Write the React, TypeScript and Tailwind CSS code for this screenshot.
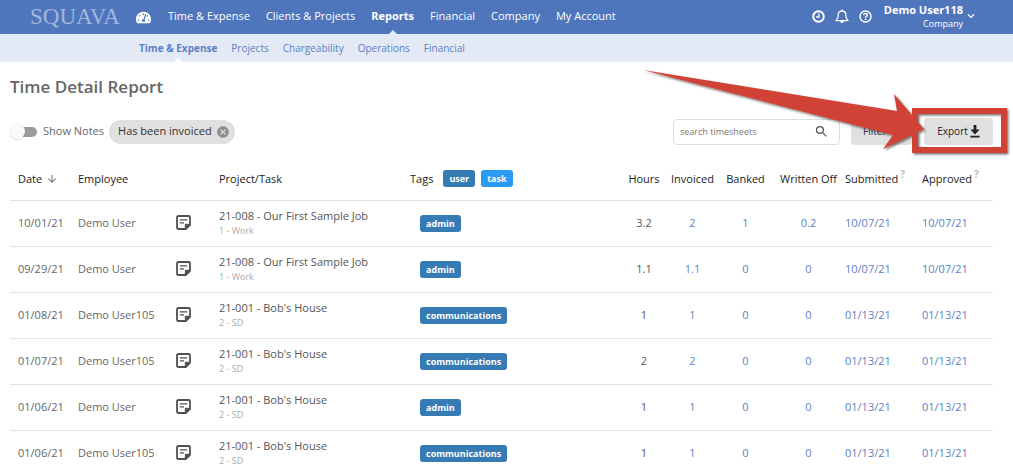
import * as React from 'react';
import { FaTachometerAlt, FaChevronDown } from 'react-icons/fa';
import { MdArrowDownward, MdCancel, MdSearch } from 'react-icons/md';

const tabs = ['Time & Expense', 'Clients & Projects', 'Reports', 'Financial', 'Company', 'My Account'];
const subTabs = ['Time & Expense', 'Projects', 'Chargeability', 'Operations', 'Financial'];

type Entry = {
  date: string;
  employee: string;
  project: string;
  task: string;
  tag: string;
  hours: string;
  invoiced: string;
  banked: string;
  writtenOff: string;
  submitted: string;
};

const entries: Entry[] = [
  { date: '10/01/21', employee: 'Demo User', project: '21-008 - Our First Sample Job', task: '1 - Work', tag: 'admin', hours: '3.2', invoiced: '2', banked: '1', writtenOff: '0.2', submitted: '10/07/21' },
  { date: '09/29/21', employee: 'Demo User', project: '21-008 - Our First Sample Job', task: '1 - Work', tag: 'admin', hours: '1.1', invoiced: '1.1', banked: '0', writtenOff: '0', submitted: '10/07/21' },
  { date: '01/08/21', employee: 'Demo User105', project: "21-001 - Bob's House", task: '2 - SD', tag: 'communications', hours: '1', invoiced: '1', banked: '0', writtenOff: '0', submitted: '01/13/21' },
  { date: '01/07/21', employee: 'Demo User105', project: "21-001 - Bob's House", task: '2 - SD', tag: 'communications', hours: '2', invoiced: '2', banked: '0', writtenOff: '0', submitted: '01/13/21' },
  { date: '01/06/21', employee: 'Demo User', project: "21-001 - Bob's House", task: '2 - SD', tag: 'admin', hours: '1', invoiced: '1', banked: '0', writtenOff: '0', submitted: '01/13/21' },
  { date: '01/06/21', employee: 'Demo User105', project: "21-001 - Bob's House", task: '2 - SD', tag: 'communications', hours: '1', invoiced: '1', banked: '0', writtenOff: '0', submitted: '01/13/21' },
];

/* Icons */
const ClockIcon = () => (
  <svg width="13" height="13" viewBox="0 0 13 13" fill="none" stroke="currentColor">
    <circle cx="6.5" cy="6.5" r="5.3" strokeWidth="1.9" />
    <path d="M6.9 3.4V7H4.2" strokeWidth="1.3" />
  </svg>
);

const BellIcon = () => (
  <svg width="14" height="15" viewBox="0 0 14 15" fill="none" stroke="currentColor" strokeWidth="1.3" strokeLinejoin="round">
    <path d="M7 .6V2M1 11.6C2.6 10.2 3.2 8.6 3.2 5.8C3.2 3.6 4.8 2 7 2C9.2 2 10.8 3.6 10.8 5.8C10.8 8.6 11.4 10.2 13 11.6Z" />
    <path d="M5.4 12.4C5.6 14.2 8.4 14.2 8.6 12.4Z" fill="currentColor" strokeWidth=".6" />
  </svg>
);

const HelpIcon = () => (
  <svg width="13" height="13" viewBox="0 0 13 13" fill="none" stroke="currentColor">
    <circle cx="6.5" cy="6.5" r="5.5" strokeWidth="1.4" />
    <path d="M4.6 5.1C4.8 3 8.4 3.1 8.4 5C8.4 6.3 6.6 6.2 6.6 7.7" strokeWidth="1.5" />
    <path d="M6.6 8.6V10.1" strokeWidth="1.6" />
  </svg>
);

const NoteIcon = () => (
  <svg width="15" height="15" viewBox="0 0 15 15" fill="none" stroke="#505050">
    <path d="M2.4 1H12.6Q14 1 14 2.4V9.8L9.8 14H2.4Q1 14 1 12.6V2.4Q1 1 2.4 1Z" strokeWidth="1.8" strokeLinejoin="round" />
    <path d="M9.3 14V9.3H14Z" fill="#505050" strokeWidth="1" />
    <path d="M3.8 4.8H11.2M3.8 7.8H8" strokeWidth="1.3" />
  </svg>
);

const DownloadIcon = () => (
  <svg width="10" height="13" viewBox="0 0 10 13" fill="currentColor">
    <path d="M3.6 0H6.4V4.6H9.6L5 9.6L.4 4.6H3.6ZM.4 10.8H9.6V12.6H.4Z" />
  </svg>
);

const Pointer: React.FC<{ className: string }> = ({ className }) => (
  <svg className={`absolute bottom-0 left-1/2 -ml-1 ${className}`} width="8" height="4" viewBox="0 0 8 4" fill="currentColor">
    <path d="M0 4L4 0L8 4Z" />
  </svg>
);

const Header: React.FC = () => (
  <header>
    <div className="flex h-[34px] items-center bg-[#4f76bd] pr-[38px] pl-[30px] text-white">
      <a href="#home" className="w-[90px] font-['Liberation_Serif',serif] text-[23px] leading-[30px] text-[#a3b7dd]">
        SQUAVA
      </a>
      <a href="#dashboard" aria-label="Dashboard" className="ml-4">
        <FaTachometerAlt size={15} />
      </a>
      <nav className="ml-[17px] flex h-full gap-4 pb-px text-[11px]">
        {tabs.map((tab) => (
          <a key={tab} href="#tab" className="relative flex items-center whitespace-nowrap">
            <span className={tab === 'Reports' ? 'font-bold' : 'font-medium'}>{tab}</span>
            {tab === 'Reports' && <Pointer className="-mb-px text-[#e4eaf5]" />}
          </a>
        ))}
      </nav>
      <div className="ml-auto flex items-center gap-[10px] pb-[2px]">
        <button aria-label="Timer"><ClockIcon /></button>
        <button aria-label="Notifications"><BellIcon /></button>
        <button aria-label="Help"><HelpIcon /></button>
        <button className="ml-[2px] flex items-center gap-1 text-right">
          <span>
            <span className="block text-[11px] leading-[14px] font-bold">Demo User118</span>
            <span className="block text-[9px] leading-[13px] font-medium">Company</span>
          </span>
          <FaChevronDown size={8} />
        </button>
      </div>
    </div>
    <nav className="flex h-7 gap-[14px] bg-[#e4eaf5] pl-[139px] text-[10px] text-[#5b7fc4]">
      {subTabs.map((tab, i) => (
        <a key={tab} href="#sub" className="relative flex items-center whitespace-nowrap">
          <span className={i === 0 ? 'font-bold' : ''}>{tab}</span>
          {i === 0 && <Pointer className="text-white" />}
        </a>
      ))}
    </nav>
  </header>
);

const Toolbar: React.FC = () => (
  <div className="mt-[19px] flex items-center">
    <label className="flex items-center gap-[6px] text-[11px]">
      <span className="relative flex h-4 w-[27px] items-center justify-end">
        <input type="checkbox" className="peer sr-only" />
        <span className="h-[10px] w-6 rounded-full bg-[#9b9b9b]" />
        <span className="absolute left-0 size-[15px] rounded-full bg-[#fafafa] shadow" />
      </span>
      Show Notes
    </label>
    <div className="ml-[5px] flex h-6 items-center gap-1 rounded-full bg-[#e0e0e0] pr-[5px] pl-[9px] text-[11px] text-[#333]">
      Has been invoiced
      <button aria-label="Remove filter" className="text-[#8d8d8d]"><MdCancel size={14} /></button>
    </div>
    <div className="ml-auto flex h-[26px] w-[167px] items-center rounded border border-[#ddd] pr-[10px] pl-[6px]">
      <input aria-label="search timesheets" placeholder="search timesheets" className="min-w-0 flex-1 text-[9px] outline-none placeholder:text-[#777]" />
      <MdSearch size={15} className="text-[#555]" />
    </div>
    <button className="ml-[11px] h-[27px] w-[61px] rounded bg-[#e0e0e0] pl-3 text-left text-[10px] text-[#333]">Filter</button>
    <div className="relative ml-3">
      <button className="flex h-[27px] w-[69px] items-center justify-center gap-[2px] rounded bg-[#e0e0e0] text-[10px] text-[#222]">
        Export <DownloadIcon />
      </button>
      {/* Callout */}
      <svg className="pointer-events-none absolute -top-12 -right-[18px]" width="370" height="94" viewBox="0 0 370 94" aria-hidden="true">
        <defs>
          <filter id="shadow" x="-5%" y="-5%" width="115%" height="120%">
            <feDropShadow dx="1.5" dy="1.5" stdDeviation="1" floodColor="#000" floodOpacity="0.55" />
          </filter>
        </defs>
        <g filter="url(#shadow)">
          <rect x="274" y="41" width="89" height="39" fill="none" stroke="#cf4336" strokeWidth="6" />
          <path d="M2 0L256 41L253 24L283 59L242 79L252 65Z" fill="#cf4336" />
        </g>
      </svg>
    </div>
  </div>
);

const Tag: React.FC<{ children: string; light?: boolean }> = ({ children, light }) => (
  <span className={`inline-block h-[17px] rounded-[3px] px-[6px] text-[9px] leading-[17px] font-bold text-white ${light ? 'bg-[#2a9af3]' : 'bg-[#377bb5]'}`}>
    {children}
  </span>
);

const Hint = () => <sup className="ml-[2px] text-[10px] font-bold text-[#bbb]">?</sup>;

const App: React.FC = () => {
  return (
    <div className="h-screen overflow-hidden bg-white font-['Open_Sans',sans-serif] text-[#666]">
      <Header />
      <main className="pr-5 pl-[10px]">
        <h1 className="mt-[13px] text-[17px] leading-6 font-semibold">Time Detail Report</h1>
        <Toolbar />
        <table className="mt-[13px] w-full table-fixed text-left text-[11px]">
          <colgroup>
            <col className="w-[68px]" />
            <col className="w-[97px]" />
            <col className="w-[44px]" />
            <col />
            <col className="w-[211px]" />
            <col className="w-[46px]" />
            <col className="w-[51px]" />
            <col className="w-[55px]" />
            <col className="w-[71px]" />
            <col className="w-[77px]" />
            <col className="w-[72px]" />
          </colgroup>
          <thead className="text-[#222]">
            <tr className="h-[42px] border-b border-[#e3e3e3] whitespace-nowrap *:font-normal">
              <th className="pl-2">
                <span className="flex items-center gap-1">Date <MdArrowDownward size={12} className="text-[#777]" /></span>
              </th>
              <th>Employee</th>
              <th aria-label="Notes" />
              <th>Project/Task</th>
              <th>
                <span className="flex items-center">
                  <span className="mr-[10px]">Tags</span>
                  <span className="flex gap-[6px]"><Tag>user</Tag><Tag light>task</Tag></span>
                </span>
              </th>
              <th className="text-center">Hours</th>
              <th className="text-center">Invoiced</th>
              <th className="text-center">Banked</th>
              <th className="text-center">Written Off</th>
              <th className="pl-px">Submitted<Hint /></th>
              <th className="pl-px">Approved<Hint /></th>
            </tr>
          </thead>
          <tbody>
            {entries.map((entry, i) => (
              <tr key={i} className="h-[46px] border-b border-[#e3e3e3]">
                <td className="pl-2">{entry.date}</td>
                <td>{entry.employee}</td>
                <td className="pb-[2px] pl-px"><NoteIcon /></td>
                <td className="pb-[2px]">
                  <div className="leading-[18px] font-medium text-[#555]">{entry.project}</div>
                  <div className="text-[9px] leading-[12px] text-[#aaa]">{entry.task}</div>
                </td>
                <td className="pl-[10px]"><Tag>{entry.tag}</Tag></td>
                <td className="text-center font-medium text-[#555]">{entry.hours}</td>
                <td className="text-center text-[#5b7fc4]">{entry.invoiced}</td>
                <td className="text-center text-[#5b7fc4]">{entry.banked}</td>
                <td className="text-center text-[#5b7fc4]">{entry.writtenOff}</td>
                <td className="pl-px text-[#5b7fc4]">{entry.submitted}</td>
                <td className="pl-px text-[#5b7fc4]">{entry.submitted}</td>
              </tr>
            ))}
          </tbody>
        </table>
      </main>
    </div>
  );
};

export default App;
